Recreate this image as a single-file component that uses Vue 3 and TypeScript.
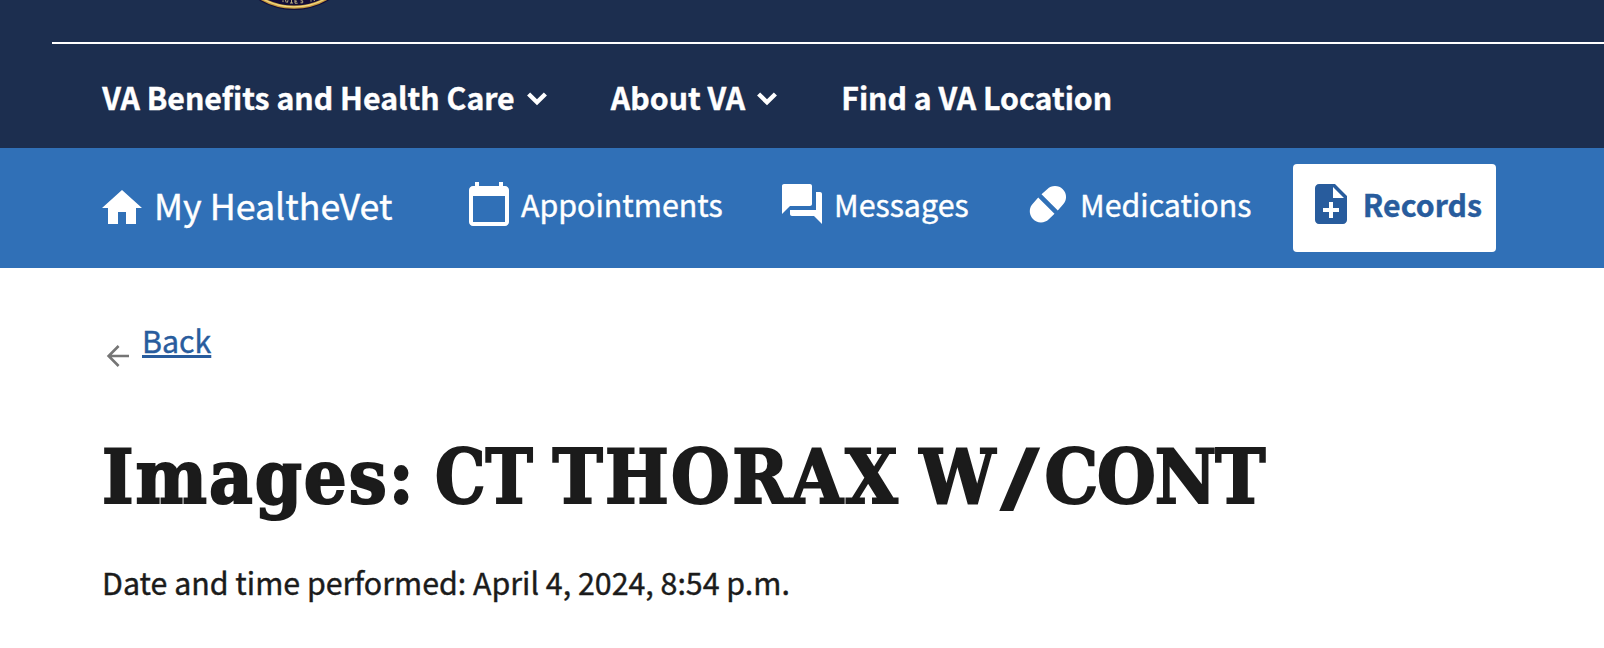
<script setup lang="ts">
interface MenuItem {
  label: string
  dropdown: boolean
}

interface HealthLink {
  label: string
  icon: string
  active?: boolean
}

const menu: MenuItem[] = [
  { label: 'VA Benefits and Health Care', dropdown: true },
  { label: 'About VA', dropdown: true },
  { label: 'Find a VA Location', dropdown: false },
]

const links: HealthLink[] = [
  {
    label: 'Appointments',
    icon: 'M20 3h-1V1h-2v2H7V1H5v2H4c-1.1 0-2 .9-2 2v16c0 1.1.9 2 2 2h16c1.1 0 2-.9 2-2V5c0-1.1-.9-2-2-2zm0 18H4V8h16v13z',
  },
  {
    label: 'Messages',
    icon: 'M21 6h-2v9H6v2c0 .55.45 1 1 1h11l4 4V7c0-.55-.45-1-1-1zm-4 6V3c0-.55-.45-1-1-1H3c-.55 0-1 .45-1 1v14l4-4h10c.55 0 1-.45 1-1z',
  },
  {
    label: 'Medications',
    icon: 'M7.1 8.75 15.25 16.9 12.4 19.65A5.45 5.45 0 0 1 4.6 11.6zM8.75 7.1 11.6 4.6A5.45 5.45 0 0 1 19.4 12.4L16.9 15.25z',
  },
  {
    label: 'Records',
    icon: 'M14 2H6c-1.1 0-1.99.9-1.99 2L4 20c0 1.1.89 2 1.99 2H18c1.1 0 2-.9 2-2V8l-6-6zm2 14h-3v3h-2v-3H8v-2h3v-3h2v3h3v2zm-3-7V3.5L18.5 9H13z',
    active: true,
  },
]
</script>

<template>
  <div class="page">
    <header class="header">
      <div class="brand">
        <svg class="seal" width="144" height="12" viewBox="0 0 144 12" aria-hidden="true">
          <circle cx="72" cy="-57.5" r="67.5" fill="#120c38" />
          <circle cx="72" cy="-57.5" r="64.6" fill="none" stroke="#c99a3e" stroke-width="3.2" />
          <circle cx="72" cy="-57.5" r="64.3" fill="none" stroke="#efd782" stroke-width="1.3" />
          <path
            d="M61 .3v1.8M63.5 0l.8 2.6M66 .2l-.6 2.4M69.5 0v3M68 3h3M73 0v3.2h2.6M73 1.2h2M78.5 2.8h2.2V.8H78.6M89 .2v1.4M92 0l.6 1"
            fill="none"
            stroke="#b9ab80"
            stroke-width="1"
          />
        </svg>
      </div>
      <nav class="menu">
        <a v-for="item in menu" :key="item.label" class="menu-item">
          <span>{{ item.label }}</span>
          <svg v-if="item.dropdown" class="chevron" width="22" height="15" viewBox="0 0 22 15">
            <path d="M2.6 3 11 11.2 19.4 3" fill="none" stroke="#fff" stroke-width="4.4" />
          </svg>
        </a>
      </nav>
    </header>

    <nav class="health">
      <a class="home">
        <svg class="home-icon" width="48" height="48" viewBox="0 0 24 24">
          <path d="M10 20v-6h4v6h5v-8h3L12 3 2 12h3v8z" fill="currentColor" />
        </svg>
        <span class="home-label">My HealtheVet</span>
      </a>
      <div class="links">
        <a v-for="link in links" :key="link.label" class="link" :class="{ active: link.active }">
          <svg width="48" height="48" viewBox="0 0 24 24">
            <path :d="link.icon" fill="currentColor" />
          </svg>
          <span>{{ link.label }}</span>
        </a>
      </div>
    </nav>

    <main class="content">
      <div class="back">
        <svg class="arrow" width="24" height="24" viewBox="0 0 24 24">
          <path d="M23 12H3M12.6 2 2.6 12l10 10" fill="none" stroke="#757575" stroke-width="2.6" />
        </svg>
        <a class="back-link">Back</a>
      </div>
      <h1 class="title">
        <span class="w-images">Images:</span>
        <span class="w-ct">CT</span>
        <span class="w-thorax">THORAX</span>
        <span class="w-cont">W<span class="slash">/</span>CONT</span>
      </h1>
      <p class="performed">Date and time performed: April 4, 2024, 8:54 p.m.</p>
    </main>
  </div>
</template>

<style>
body {
  margin: 0;
  background: #fff;
}
</style>

<style scoped>
.page {
  width: 1604px;
  height: 648px;
  overflow: hidden;
  background: #fff;
  color: #1b1b1b;
  font-family: "Noto Sans CJK SC", "Noto Sans", sans-serif;
  font-size: 30.37px;
  line-height: 48px;
  white-space: nowrap;
  -webkit-text-stroke: 0.4px currentColor;
}
.header {
  height: 148px;
  background: #1c2e4f;
  color: #fff;
}
.brand {
  height: 42px;
  margin-left: 52px;
  border-bottom: 2px solid #fff;
}
.seal {
  display: block;
  margin-left: 170px;
}
.menu {
  display: flex;
  gap: 62.8px;
  padding: 29px 0 0 102.3px;
  font-size: 30.28px;
  font-weight: 700;
}
.menu-item {
  display: flex;
  align-items: center;
  gap: 11.3px;
}
.chevron {
  margin-top: 3px;
}
.health {
  display: flex;
  align-items: flex-start;
  height: 120px;
  background: #3070b7;
  color: #fff;
}
.home {
  display: flex;
  gap: 8px;
  width: 353px;
  padding: 32px 0 0 98px;
  font-size: 35.75px;
}
.home-icon {
  margin-top: 4px;
}
.home-label {
  margin-top: 1px;
}
.links {
  display: flex;
  gap: 27.4px;
  padding-top: 16px;
}
.link {
  display: flex;
  gap: 8px;
  height: 72px;
  padding: 16px 14px 0;
  border-radius: 4px;
}
.active {
  background: #fff;
  color: #285c9d;
  font-size: 30.25px;
  font-weight: 700;
}
.content {
  padding: 48px 0 0 102px;
}
.back {
  display: flex;
  gap: 11px;
  height: 48px;
  padding-left: 3px;
}
.arrow {
  width: 26px;
  margin-top: 28px;
}
.back-link {
  color: #285c9d;
  text-decoration: underline;
  text-decoration-thickness: 3px;
  text-underline-offset: 2px;
}
.title {
  display: flex;
  height: 96px;
  margin: 65px 0 0;
  font: bold 75px/96px "DejaVu Serif Condensed", "DejaVu Serif", serif;
  -webkit-text-stroke: 2px #1b1b1b;
}
.w-images {
  width: 333px;
  letter-spacing: 2px;
}
.w-ct {
  width: 117.5px;
  transform: scaleX(0.94);
  transform-origin: left;
}
.w-thorax {
  width: 367px;
  letter-spacing: 2.3px;
}
.w-cont {
  letter-spacing: -1.2px;
}
.slash {
  display: inline-block;
  margin: 0 14px 0 13px;
  transform: scaleX(1.5);
}
.performed {
  margin: 33px 0 0;
}
</style>
